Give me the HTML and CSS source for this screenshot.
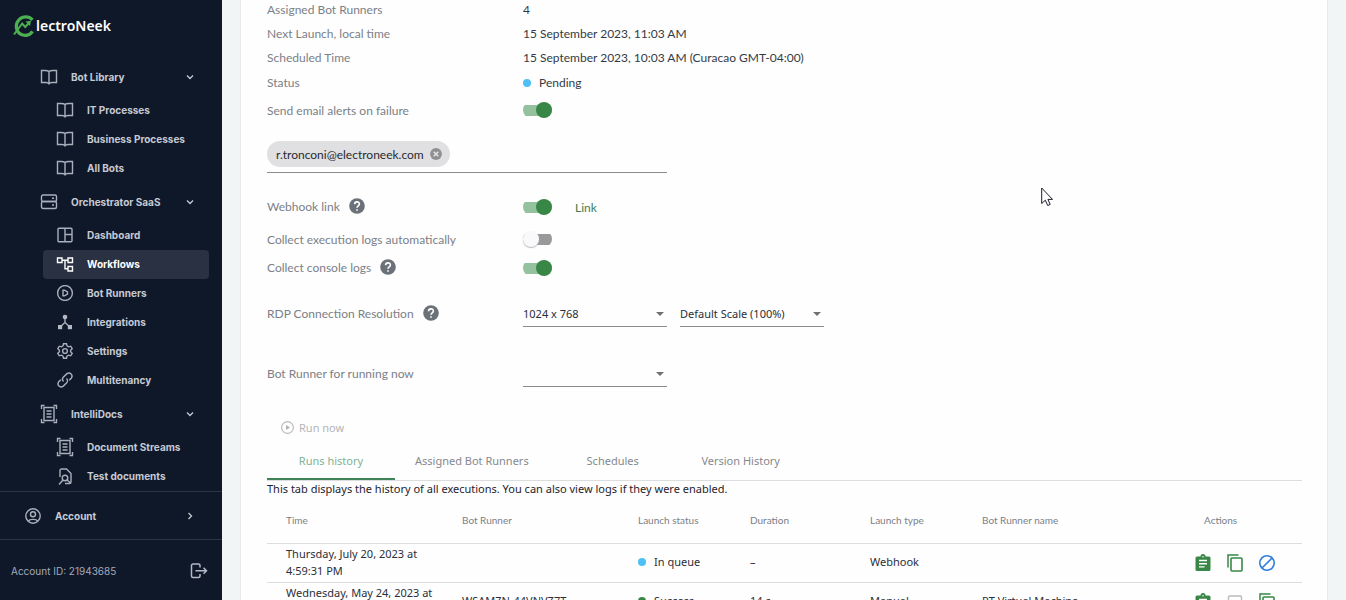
FILE: index.html
```html
<!DOCTYPE html>
<html lang="en">
<head>
<meta charset="utf-8">
<title>ElectroNeek – Workflows</title>
<link rel="stylesheet" href="styles.css">
</head>
<body>
<svg class="sprite" aria-hidden="true">
  <symbol id="book" viewBox="0 0 18 16"><path d="M9 2.600C8 1.600 6.800 1.500 5 1.500H1.500V13.500H6C7.500 13.500 8.500 13.800 9 14.800C9.500 13.800 10.500 13.500 12 13.500H16.500V1.500H13C11.200 1.500 10 1.600 9 2.600ZM9 2.600V14.500"/></symbol>
  <symbol id="chev" viewBox="0 0 8 8"><path d="M1 2.500L4 5.500L7 2.500"/></symbol>
  <symbol id="doc" viewBox="0 0 18 20"><path d="M1.500 5V1.500H4.500M13.500 1.500H16.500V5M16.500 15V18.500H13.500M4.500 18.500H1.500V15M4 3.500H14V16.500H4ZM6.500 7H11.500M6.500 10H11.500M6.500 13H11.500"/></symbol>
  <symbol id="help" viewBox="0 0 16 16"><circle cx="8" cy="8" r="7.800" fill="#6b7178"/><path d="M5.600 6.300C5.600 3.100 10.400 3.100 10.400 6.100C10.400 7.800 8 8 8 9.800M8 11.200V12.800" fill="none" stroke="#fff" stroke-width="1.600"/></symbol>
  <symbol id="clip" viewBox="0 0 16 18"><path d="M2 2.500H5.500A2.500 2.500 0 0 1 10.500 2.500H14A1.500 1.500 0 0 1 15.500 4V15.500A1.500 1.500 0 0 1 14 17H2A1.500 1.500 0 0 1 .5 15.500V4A1.500 1.500 0 0 1 2 2.500Z" fill="#388746"/><circle cx="8" cy="2.800" r=".8" fill="#fff"/><path d="M4 6.500H12M4 9.700H12M4 12.900H9.500" stroke="#fff" stroke-width="1.400"/></symbol>
  <symbol id="copy" viewBox="0 0 16 18"><path d="M1 13.500V1H11.500" fill="none" stroke="#388746" stroke-width="1.500"/><rect x="4" y="4" width="11" height="13" rx="1" fill="none" stroke="#388746" stroke-width="1.600"/></symbol>
</svg>
<div class="app">
  <aside class="sidebar">
    <a class="logo" href="#">
      <svg width="22" height="24" viewBox="0 0 22 24" fill="none" stroke="#4caf50"><path d="M19.500 5.800A8.800 8.800 0 1 0 6 19A8.800 8.800 0 0 0 19.500 17.300" stroke-width="3.200"/><path d="M1 20.500L9.200 9.500L12.200 13L15.500 9.500" stroke-width="2"/><path d="M12.500 7.500L18 6.800L17 12Z" fill="#4caf50" stroke="none"/></svg>
      <span>lectroNeek</span>
    </a>
    <nav class="nav">
      <button class="group"><svg class="ic"><use href="#book"/></svg><span>Bot Library</span><svg class="chev"><use href="#chev"/></svg></button>
      <a class="item" href="#"><svg class="ic"><use href="#book"/></svg>IT Processes</a>
      <a class="item" href="#"><svg class="ic"><use href="#book"/></svg>Business Processes</a>
      <a class="item" href="#"><svg class="ic"><use href="#book"/></svg>All Bots</a>
      <button class="group"><svg class="ic" viewBox="0 0 18 16"><rect x="1.500" y="1" width="15" height="6.500" rx="1.500"/><rect x="1.500" y="7.500" width="15" height="7" rx="1.500"/><path d="M12 4.200H14M12 11H14"/></svg><span>Orchestrator SaaS</span><svg class="chev"><use href="#chev"/></svg></button>
      <a class="item" href="#"><svg class="ic" viewBox="0 0 18 16"><rect x="2" y="1.200" width="14" height="13.600" rx="1"/><path d="M9 1V15M9 7.500H16"/></svg>Dashboard</a>
      <a class="item active" href="#" aria-current="page"><svg class="ic" viewBox="0 0 18 16"><path d="M1.500 2H6V6.500H1.500ZM12 2H16.500V6.500H12ZM12 10.500H16.500V15H12ZM6 4.200H12M9 4.200V12.700H12"/></svg>Workflows</a>
      <a class="item" href="#"><svg class="ic" viewBox="0 0 18 16"><circle cx="9" cy="8" r="7.400"/><path d="M7 5.200H8.500L11.500 7V9L8.500 10.800H7Z"/></svg>Bot Runners</a>
      <a class="item" href="#"><svg class="ic" viewBox="0 0 18 16"><path d="M9 3V8.500L4 13M9 8.500L14 13"/><g fill="#b4b9c3" stroke="none"><circle cx="9" cy="3" r="2.300"/><rect x="2" y="11" width="4.200" height="4.200"/><rect x="11.800" y="11" width="4.200" height="4.200"/></g></svg>Integrations</a>
      <a class="item" href="#"><svg class="ic" viewBox="0 0 18 16"><path d="M7.500.8H10.500L11 2.900L12.600 3.800L14.700 3.200L16.200 5.700L14.600 7.200V8.800L16.200 10.300L14.700 12.800L12.600 12.200L11 13.100L10.500 15.200H7.500L7 13.100L5.400 12.200L3.300 12.800L1.800 10.300L3.400 8.800V7.200L1.800 5.700L3.300 3.200L5.400 3.800L7 2.900Z"/><circle cx="9" cy="8" r="2.400"/></svg>Settings</a>
      <a class="item" href="#"><svg class="ic" viewBox="0 0 18 16"><path d="M7.500 9.500C6.200 8.200 6.200 6.300 7.500 5L10.700 1.900C14 -.5 17.500 3 15.300 6.200L13.200 8.300M10.500 6.500C11.800 7.800 11.800 9.700 10.500 11L7.300 14.100C4 16.500 .5 13 2.700 9.800L4.800 7.700"/></svg>Multitenancy</a>
      <button class="group"><svg class="ic tall"><use href="#doc"/></svg><span>IntelliDocs</span><svg class="chev"><use href="#chev"/></svg></button>
      <a class="item" href="#"><svg class="ic tall"><use href="#doc"/></svg>Document Streams</a>
      <a class="item" href="#"><svg class="ic tall" viewBox="0 0 18 20"><path d="M4 11V4.500A1.500 1.500 0 0 1 5.500 3H10.500L15 7.500V16A1.500 1.500 0 0 1 13.500 17.500H9M10.500 13.500L14.500 17"/><circle cx="9" cy="12" r="2.800"/><path d="M7 14L3 18.500"/></svg>Test documents</a>
    </nav>
    <button class="account"><svg class="ic" viewBox="0 0 16 16"><circle cx="8" cy="8" r="7.200"/><circle cx="8" cy="6.300" r="2.500"/><path d="M3.500 13.300C4.300 10.700 11.700 10.700 12.500 13.300"/></svg><span>Account</span><svg class="chev side"><use href="#chev"/></svg></button>
    <div class="foot"><span>Account ID: 21943685</span>
      <button class="plain" aria-label="Log out"><svg width="18" height="16" viewBox="0 0 18 16" fill="none" stroke="#b4b9c3" stroke-width="1.500"><path d="M10 4.500V2.500A1.500 1.500 0 0 0 8.500 1H3A1.500 1.500 0 0 0 1.500 2.500V13A1.500 1.500 0 0 0 3 14.500H8.500A1.500 1.500 0 0 0 10 13V11M5.500 7.800H16.500M13.500 4.800L16.500 7.800L13.500 10.800"/></svg></button>
    </div>
  </aside>
  <main class="main">
    <section class="panel">
      <dl class="details">
        <div class="row"><dt>Assigned Bot Runners</dt><dd>4</dd></div>
        <div class="row"><dt>Next Launch, local time</dt><dd>15 September 2023, 11:03 AM</dd></div>
        <div class="row r25"><dt>Scheduled Time</dt><dd>15 September 2023, 10:03 AM (Curacao GMT-04:00)</dd></div>
        <div class="row r25"><dt>Status</dt><dd class="status">Pending</dd></div>
      </dl>
      <div class="row r30"><label for="alerts">Send email alerts on failure</label><input class="switch" id="alerts" type="checkbox" checked></div>
      <div class="emails"><span class="chip">r.tronconi@electroneek.com<button class="plain" aria-label="Remove"><svg width="12" height="12" viewBox="0 0 12 12"><circle cx="6" cy="6" r="5.900" fill="#8f8f92"/><path d="M3.700 3.700L8.300 8.300M8.300 3.700L3.700 8.300" stroke="#e4e4e6" stroke-width="1.500"/></svg></button></span></div>
      <div class="row r32"><span class="lbl"><label for="hook">Webhook link</label><svg class="help"><use href="#help"/></svg></span><span class="field"><input class="switch" id="hook" type="checkbox" checked><a class="link" href="#">Link</a></span></div>
      <div class="row r32"><label for="exec">Collect execution logs automatically</label><input class="switch" id="exec" type="checkbox"></div>
      <div class="row r26"><span class="lbl"><label for="console">Collect console logs</label><svg class="help"><use href="#help"/></svg></span><input class="switch" id="console" type="checkbox" checked></div>
      <div class="row rdp"><span class="lbl"><label for="res">RDP Connection Resolution</label><svg class="help"><use href="#help"/></svg></span>
        <span class="selects"><span class="select"><select id="res"><option>1024 x 768</option></select></span><span class="select"><select aria-label="Scale"><option>Default Scale (100%)</option></select></span></span></div>
      <div class="row runner"><span class="lbl"><label for="runner">Bot Runner for running now</label></span><span class="select"><select id="runner"><option></option></select></span></div>
      <button class="run" disabled><svg width="13" height="13" viewBox="0 0 13 13"><circle cx="6.500" cy="6.500" r="5.900" fill="none" stroke="#b9bbbd" stroke-width="1.200"/><path d="M5 4L9 6.500L5 9Z" fill="#b0b2b4"/></svg>Run now</button>
      <div class="tabs" role="tablist">
        <button role="tab" aria-selected="true">Runs history</button><button role="tab">Assigned Bot Runners</button><button role="tab">Schedules</button><button role="tab">Version History</button>
      </div>
      <p class="note">This tab displays the history of all executions. You can also view logs if they were enabled.</p>
      <table class="runs">
        <colgroup><col class="c-wide"><col class="c-wide"><col class="c-mid"><col class="c-dur"><col class="c-mid"><col><col class="c-act"></colgroup>
        <thead><tr><th>Time</th><th>Bot Runner</th><th>Launch status</th><th>Duration</th><th>Launch type</th><th>Bot Runner name</th><th class="act-head">Actions</th></tr></thead>
        <tbody>
          <tr><td>Thursday, July 20, 2023 at 4:59:31 PM</td><td></td><td><span class="status">In queue</span></td><td>–</td><td>Webhook</td><td></td>
            <td><div class="actions"><button class="plain" aria-label="Log"><svg width="16" height="18"><use href="#clip"/></svg></button><button class="plain" aria-label="Copy"><svg width="16" height="18"><use href="#copy"/></svg></button><button class="plain" aria-label="Cancel"><svg width="16" height="18" viewBox="0 0 16 18" fill="none" stroke="#2f7ddb" stroke-width="1.600"><circle cx="8" cy="9" r="7.200"/><path d="M13 4L3 14"/></svg></button></div></td></tr>
          <tr><td>Wednesday, May 24, 2023 at 3:12:08 PM</td><td>WSAMZN-44VNVZ7T</td><td><span class="status done">Success</span></td><td>14 s</td><td>Manual</td><td>PT Virtual Machine</td>
            <td><div class="actions"><button class="plain" aria-label="Log"><svg width="16" height="18"><use href="#clip"/></svg></button><button class="plain" aria-label="View" disabled><svg width="16" height="18" viewBox="0 0 16 18" fill="none" stroke="#b9bbbd" stroke-width="1.400"><rect x="1.500" y="3" width="13" height="12" rx="1"/></svg></button><button class="plain" aria-label="Copy"><svg width="16" height="18"><use href="#copy"/></svg></button></div></td></tr>
        </tbody>
      </table>
    </section>
    <svg class="cursor" width="12" height="20" viewBox="0 0 12 20"><path d="M.7 1V16.500L4.300 13.200L6.700 18.500L9.200 17.400L6.900 12.400H11.500Z" fill="#fff" stroke="#1b1b2b"/></svg>
  </main>
</div>
</body>
</html>
```
FILE: styles.css
```css
* { box-sizing: border-box; }
body { margin: 0; background: #f1f5f6; color: #2a2f3a; font: 11px/17px "Noto Sans", sans-serif; }
button { font: inherit; color: inherit; background: none; border: 0; padding: 0; }
a { color: inherit; text-decoration: none; }
.sprite { position: absolute; width: 0; height: 0; }
.app { display: flex; height: 100vh; overflow: hidden; }

.sidebar { width: 222px; flex: none; display: flex; flex-direction: column; background: #0f1829; color: #c6cad3; font: 700 10px/16px Inter, sans-serif; }
.logo { display: flex; align-items: center; gap: 1px; height: 24px; margin: 14px 0 20px 13px; color: #fff; font: 600 14px/22px "Noto Sans", sans-serif; }
.nav { flex: 1; min-height: 0; overflow: hidden; }
.ic { width: 18px; height: 16px; flex: none; fill: none; stroke: #a9afbb; stroke-width: 1.4; }
.ic.tall { height: 20px; }
.group, .account { display: flex; align-items: center; width: 100%; text-align: left; }
.group { height: 38px; padding: 0 28px 0 40px; gap: 13px; }
.group span, .account span { flex: 1; }
.chev { width: 8px; height: 8px; fill: none; stroke: #c6cad3; stroke-width: 1.3; }
.side { transform: rotate(-90deg); }
.item { display: flex; align-items: center; height: 29px; gap: 13px; margin: 0 13px 0 43px; padding: 0 0 1px 13px; border-radius: 4px; }
.active { background: #2a3142; color: #fff; }
.active .ic { stroke: #fff; }
.account { height: 49px; padding: 0 28px 0 24px; gap: 13px; border-top: 1px solid #2d3544; border-bottom: 1px solid #2d3544; }
.foot { display: flex; align-items: center; justify-content: space-between; height: 60px; padding: 2px 14px 0 11px; color: #a3abbb; font-weight: 400; }
.plain { display: inline-flex; }

.main { flex: 1; min-width: 0; position: relative; padding: 0 18px; }
.panel { min-height: 100%; background: #fefefe; border: 0 solid #e7eaec; border-width: 0 1px; padding: 0 25px 0 26px; }
.details { margin: -3px 0 0; }
dd { margin: 0; }
.row { display: grid; grid-template-columns: 256px 1fr; align-items: center; height: 24px; color: #7b8087; font: 12px/17px Lato, sans-serif; }
.row dd { color: #343a44; }
.r25 { height: 25px; }
.r26 { height: 26px; }
.r30 { height: 30px; }
.r32 { height: 32px; }
.rdp { margin-top: 20px; height: 26px; }
.runner { margin-top: 34px; height: 26px; }
.status { display: flex; align-items: center; gap: 8px; }
.status::before { content: ""; width: 8px; height: 8px; border-radius: 50%; background: #4fc0f5; }
.status.done::before { background: #388746; }
.lbl { display: flex; align-items: center; gap: 9px; padding-bottom: 2px; }
.help { width: 16px; height: 16px; }
.switch { appearance: none; display: flex; align-items: center; width: 29px; height: 16px; margin: 0; border-radius: 8px; background: linear-gradient(#999, #999) center / 100% 11px no-repeat; }
.switch::before { content: ""; width: 16px; height: 16px; border-radius: 50%; background: #f9f9fc; box-shadow: 0 1px 1px #bbb; }
.switch:checked { justify-content: flex-end; background-image: linear-gradient(#94c19e, #94c19e); }
.switch:checked::before { background: #388746; box-shadow: none; }
.field { display: flex; align-items: center; gap: 23px; }
.link { color: #3f7d50; }
.emails { width: 400px; max-width: 100%; margin: 16px 0 18px; padding-bottom: 5px; border-bottom: 1px solid #8b8b8e; }
.chip { display: inline-flex; align-items: center; gap: 6px; height: 26px; padding: 0 8px 0 9px; border-radius: 13px; background: #e0e0e2; color: #2a2a30; font: 12px/17px Lato, sans-serif; vertical-align: top; }
.selects { display: flex; gap: 13px; }
.select { position: relative; width: 144px; }
.select::after { content: ""; position: absolute; right: 3px; top: 11px; border: solid transparent; border-width: 4px 4px 0; border-top-color: #707070; pointer-events: none; }
select { appearance: none; display: block; width: 100%; height: 26px; border: 0; border-bottom: 1px solid #8b8b8e; border-radius: 0; background: none; padding: 0; color: #2a2f3a; font: 11px/17px "Noto Sans", sans-serif; }
.run { display: flex; align-items: center; gap: 5px; height: 25px; margin: 28px 0 0 14px; color: #b3b5b8; }
.tabs { display: flex; border-bottom: 1px solid #dcdddf; color: #85898f; }
.tabs button { min-width: 128px; height: 40px; padding: 2px 20px 0; border-bottom: 2px solid transparent; }
.tabs [aria-selected="true"] { color: #7fb397; border-bottom-color: #3e8458; }
.note { margin: 0; line-height: 16px; color: #1f222b; }
.runs { width: 100%; table-layout: fixed; border-collapse: collapse; }
.c-wide { width: 176px; }
.c-mid { width: 112px; }
.c-dur { width: 120px; }
.c-act { width: 126px; }
.runs th { height: 46px; padding: 2px 0 0 19px; text-align: left; font: 10px/17px Lato, sans-serif; color: #7b8087; border-bottom: 1px solid #dcdddf; }
.runs td { height: 39px; padding: 1px 0 3px 19px; border-bottom: 1px solid #dcdddf; }
.runs .act-head { padding-left: 28px; }
.actions { display: flex; gap: 16px; padding-top: 2px; }
.cursor { position: absolute; left: 819px; top: 187px; }
```
